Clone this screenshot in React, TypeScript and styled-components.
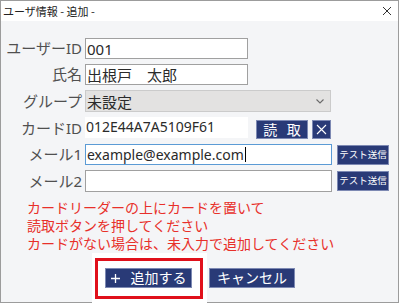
import React from "react";
import styled, { createGlobalStyle } from "styled-components";

const GlobalStyle = createGlobalStyle`
  html, body {
    margin: 0;
    padding: 0;
    background: #ffffff;
  }
  body {
    font-family: "Noto Sans", "Noto Sans CJK JP", sans-serif;
  }
  * {
    box-sizing: border-box;
  }
`;

const Window = styled.div`
  width: 399px;
  height: 303px;
  border: 1px solid #9c9c9c;
  background: #f4f5f7;
  display: flex;
  flex-direction: column;
`;

const TitleBar = styled.div`
  height: 20px;
  flex-shrink: 0;
  background: #ffffff;
  display: flex;
  align-items: center;
  justify-content: space-between;
  padding: 0 6px 0 2px;
`;

const Title = styled.span`
  font-family: "Noto Sans CJK JP", sans-serif;
  font-size: 11px;
  color: #222;
  line-height: 1;
`;

const Body = styled.div`
  flex: 1;
  min-height: 0;
  padding-top: 17px;
  display: flex;
  flex-direction: column;
`;

const Form = styled.div`
  display: flex;
  flex-direction: column;
  gap: 5px;
`;

const Row = styled.div<{ $h: number }>`
  height: ${(p) => p.$h}px;
  display: flex;
  align-items: center;
`;

const Label = styled.div`
  width: 81px;
  margin-right: 3px;
  flex-shrink: 0;
  text-align: right;
  font-size: 15px;
  line-height: 1;
  color: #505050;
  white-space: nowrap;
`;

const Field = styled.div<{ $w: number; $focus?: boolean }>`
  width: ${(p) => p.$w}px;
  height: 100%;
  background: #ffffff;
  border: 1px solid ${(p) => (p.$focus ? "#5b9bd5" : "#a0a0a0")};
  padding: 0 1px;
  display: flex;
  align-items: center;
  font-size: ${(p) => (p.$focus ? 14 : 15)}px;
  color: #2a2a2a;
  white-space: nowrap;
`;

const Caret = styled.span`
  display: inline-block;
  width: 1px;
  height: 15px;
  background: #000;
  margin-left: 1px;
`;

const Select = styled.div`
  width: 246px;
  height: 100%;
  background: #e3e2e1;
  border: 1px solid #cbcbcb;
  padding: 0 6px 0 1px;
  display: flex;
  align-items: center;
  justify-content: space-between;
  font-size: 15px;
  color: #2a2a2a;
`;

const CardValue = styled.div`
  width: 163px;
  height: 21px;
  align-self: flex-start;
  background: #ffffff;
  padding: 0 1px 2px;
  display: flex;
  align-items: center;
  font-size: 14px;
  color: #2a2a2a;
`;

const NavyButton = styled.button<{ $w: number; $h: number; $fs: number; $ml?: number }>`
  width: ${(p) => p.$w}px;
  height: ${(p) => p.$h}px;
  margin-left: ${(p) => p.$ml ?? 0}px;
  flex-shrink: 0;
  padding: 0;
  background: #293a77;
  border: 1px solid #7d89b3;
  color: #ffffff;
  font-family: "Noto Sans", "Noto Sans CJK JP", sans-serif;
  font-size: ${(p) => p.$fs}px;
  line-height: 1;
  display: flex;
  align-items: center;
  justify-content: center;
  white-space: nowrap;
`;

const CardButtons = styled.div`
  align-self: flex-end;
  display: flex;
`;

const ReadLabel = styled.span`
  letter-spacing: 3px;
  margin-right: -3px;
`;

const Notice = styled.div`
  margin: 6px 0 0 26px;
  font-family: "Noto Sans CJK JP", sans-serif;
  font-size: 14px;
  line-height: 18px;
  color: #e8302a;
`;

const Actions = styled.div`
  margin-top: 1px;
  padding-left: 91px;
  display: flex;
  align-items: flex-start;
`;

const Highlight = styled.div`
  background: #ffffff;
  padding: 5px 4px 5px 3px;
`;

const HighlightFrame = styled.div`
  border: 3px solid #e0101b;
  padding: 7px 8px 8px 7px;
`;

const PlusWrap = styled.span`
  display: flex;
  margin-right: 11px;
`;

const CancelWrap = styled.div`
  margin: 15px 0 0 2px;
`;

const CloseIcon = () => (
  <svg width="10" height="10" viewBox="0 0 10 10">
    <path d="M1 1L9 9M9 1L1 9" stroke="#333" strokeWidth="1" fill="none" />
  </svg>
);

const ClearIcon = () => (
  <svg width="11" height="11" viewBox="0 0 11 11">
    <path d="M1 1L10 10M10 1L1 10" stroke="#ffffff" strokeWidth="1.1" fill="none" />
  </svg>
);

const PlusIcon = () => (
  <svg width="9" height="9" viewBox="0 0 9 9">
    <path d="M4.5 0V9M0 4.5H9" stroke="#ffffff" strokeWidth="1.3" fill="none" />
  </svg>
);

const Chevron = () => (
  <svg width="8" height="5" viewBox="0 0 8 5">
    <path d="M0.5 0.5L4 4L7.5 0.5" stroke="#6a6a6a" strokeWidth="1.1" fill="none" />
  </svg>
);

const App = () => {
  return (
    <>
      <GlobalStyle />
      <Window>
        <TitleBar>
          <Title>ユーザ情報 - 追加 -</Title>
          <CloseIcon />
        </TitleBar>
        <Body>
          <Form>
            <Row $h={21}>
              <Label>ユーザーID</Label>
              <Field $w={163}>001</Field>
            </Row>
            <Row $h={21}>
              <Label>氏名</Label>
              <Field $w={163}>出根戸　太郎</Field>
            </Row>
            <Row $h={22}>
              <Label>グループ</Label>
              <Select>
                <span>未設定</span>
                <Chevron />
              </Select>
            </Row>
            <Row $h={22}>
              <Label>カードID</Label>
              <CardValue>012E44A7A5109F61</CardValue>
              <CardButtons>
                <NavyButton $w={52} $h={19} $fs={14} $ml={8}>
                  <ReadLabel>読 取</ReadLabel>
                </NavyButton>
                <NavyButton $w={19} $h={19} $fs={12} $ml={4}>
                  <ClearIcon />
                </NavyButton>
              </CardButtons>
            </Row>
            <Row $h={21}>
              <Label>メール1</Label>
              <Field $w={247} $focus>
                example@example.com
                <Caret />
              </Field>
              <NavyButton $w={52} $h={20} $fs={9.5} $ml={5}>
                テスト送信
              </NavyButton>
            </Row>
            <Row $h={22}>
              <Label>メール2</Label>
              <Field $w={247} />
              <NavyButton $w={52} $h={20} $fs={9.5} $ml={5}>
                テスト送信
              </NavyButton>
            </Row>
          </Form>
          <Notice>
            カードリーダーの上にカードを置いて
            <br />
            読取ボタンを押してください
            <br />
            カードがない場合は、未入力で追加してください
          </Notice>
          <Actions>
            <Highlight>
              <HighlightFrame>
                <NavyButton $w={87} $h={20} $fs={14}>
                  <PlusWrap>
                    <PlusIcon />
                  </PlusWrap>
                  追加する
                </NavyButton>
              </HighlightFrame>
            </Highlight>
            <CancelWrap>
              <NavyButton $w={86} $h={20} $fs={14}>
                キャンセル
              </NavyButton>
            </CancelWrap>
          </Actions>
        </Body>
      </Window>
    </>
  );
};

export default App;
